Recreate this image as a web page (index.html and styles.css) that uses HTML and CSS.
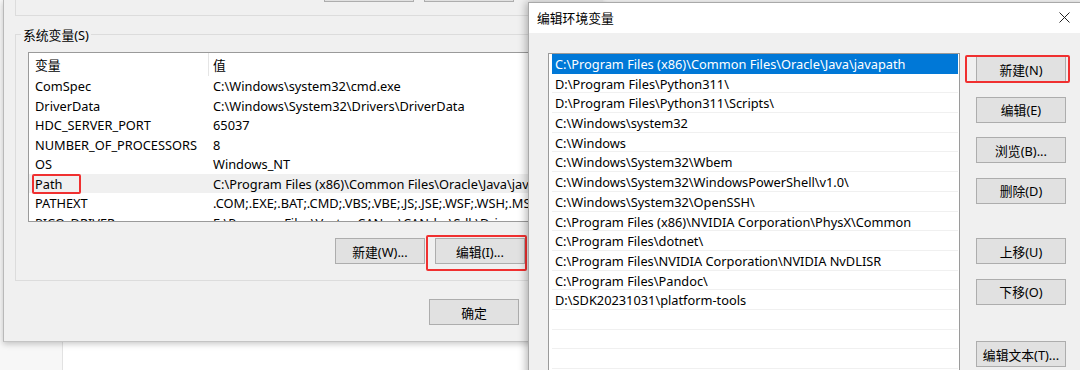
FILE: index.html
```html
<!DOCTYPE html>
<html lang="zh-CN">
<head>
  <meta charset="UTF-8">
  <meta name="viewport" content="width=device-width, initial-scale=1.0">
  <title>编辑环境变量</title>
  <link rel="stylesheet" href="styles.css">
</head>
<body>
  <div class="desktop">
    <div class="backdrop"></div>

    <!-- 环境变量窗口（在后面） -->
    <div class="window env-window">
      <div class="user-tail">
        <div class="btn-row btn-row-top">
          <button class="btn" aria-label="新建"></button>
          <button class="btn" aria-label="编辑"></button>
        </div>
      </div>

      <div class="group">
        <span class="group-title">系统变量(S)</span>
        <div class="var-list">
          <div class="var-row var-head">
            <span class="col-name">变量</span>
            <span class="col-value">值</span>
          </div>
          <div class="var-row"><span class="col-name">ComSpec</span><span class="col-value">C:\Windows\system32\cmd.exe</span></div>
          <div class="var-row"><span class="col-name">DriverData</span><span class="col-value">C:\Windows\System32\Drivers\DriverData</span></div>
          <div class="var-row"><span class="col-name">HDC_SERVER_PORT</span><span class="col-value">65037</span></div>
          <div class="var-row"><span class="col-name">NUMBER_OF_PROCESSORS</span><span class="col-value">8</span></div>
          <div class="var-row"><span class="col-name">OS</span><span class="col-value">Windows_NT</span></div>
          <div class="var-row is-current"><span class="col-name"><span class="mark mark-path"></span>Path</span><span class="col-value">C:\Program Files (x86)\Common Files\Oracle\Java\javapath;C:\Windows</span></div>
          <div class="var-row"><span class="col-name">PATHEXT</span><span class="col-value">.COM;.EXE;.BAT;.CMD;.VBS;.VBE;.JS;.JSE;.WSF;.WSH;.MSC</span></div>
          <div class="var-row"><span class="col-name">PICO_DRIVER</span><span class="col-value">E:\Program Files\Vector CANoe\CANdrv\Sdk\Drivers</span></div>
        </div>
        <div class="btn-row">
          <button class="btn">新建(W)...</button>
          <button class="btn btn-marked"><span class="mark mark-edit"></span>编辑(I)...</button>
        </div>
      </div>

      <div class="ok-row">
        <button class="btn">确定</button>
      </div>
    </div>

    <!-- 编辑环境变量对话框 -->
    <div class="window edit-dialog">
      <div class="titlebar">
        <span class="title">编辑环境变量</span>
        <span class="close">
          <svg width="11" height="11" viewBox="0 0 11 11"><path d="M0.5 0.5 L10.5 10.5 M10.5 0.5 L0.5 10.5" stroke="#222" stroke-width="1" fill="none"/></svg>
        </span>
      </div>
      <div class="dialog-body">
        <div class="path-list">
          <div class="path-row selected">C:\Program Files (x86)\Common Files\Oracle\Java\javapath</div>
          <div class="path-row">D:\Program Files\Python311\</div>
          <div class="path-row">D:\Program Files\Python311\Scripts\</div>
          <div class="path-row">C:\Windows\system32</div>
          <div class="path-row">C:\Windows</div>
          <div class="path-row">C:\Windows\System32\Wbem</div>
          <div class="path-row">C:\Windows\System32\WindowsPowerShell\v1.0\</div>
          <div class="path-row">C:\Windows\System32\OpenSSH\</div>
          <div class="path-row">C:\Program Files (x86)\NVIDIA Corporation\PhysX\Common</div>
          <div class="path-row">C:\Program Files\dotnet\</div>
          <div class="path-row">C:\Program Files\NVIDIA Corporation\NVIDIA NvDLISR</div>
          <div class="path-row">C:\Program Files\Pandoc\</div>
          <div class="path-row">D:\SDK20231031\platform-tools</div>
          <div class="path-row"></div>
          <div class="path-row"></div>
          <div class="path-row"></div>
          <div class="path-row"></div>
        </div>
        <div class="side-buttons">
          <button class="btn btn-marked"><span class="mark mark-new"></span>新建(N)</button>
          <button class="btn">编辑(E)</button>
          <button class="btn">浏览(B)...</button>
          <button class="btn">删除(D)</button>
          <button class="btn btn-move">上移(U)</button>
          <button class="btn">下移(O)</button>
          <button class="btn btn-text">编辑文本(T)...</button>
        </div>
      </div>
    </div>
  </div>
</body>
</html>
```

FILE: styles.css
```css
/* 基础 */
body {
  margin: 0;
  background: #ffffff;
  font-family: "Noto Sans", "Noto Sans CJK SC", sans-serif;
  font-size: 12.8px;
  color: #000000;
}

.desktop {
  position: relative;
  width: 1080px;
  height: 370px;
  overflow: hidden;
  background: #ffffff;
}

.backdrop {
  position: absolute;
  left: 0;
  top: 0;
  width: 62px;
  height: 370px;
  background: #f7f7f7;
  border-right: 1px solid #e2e2e2;
}

.window {
  position: absolute;
  background: #f0f0f0;
  box-sizing: border-box;
}

.btn {
  width: 90px;
  height: 26px;
  padding: 0;
  font: inherit;
  color: #000000;
  background: #e1e1e1;
  border: 1px solid #adadad;
  position: relative;
}

.btn-row {
  display: flex;
  gap: 10px;
  margin: 16px 0 0 307px;
}

/* 红色标注框 */
.mark {
  position: absolute;
  border: 2px solid #f03030;
  border-radius: 2px;
  pointer-events: none;
}

/* 环境变量窗口 */
.env-window {
  left: 3px;
  top: 0;
  width: 600px;
  border-left: 1px solid #b9b9b9;
  border-bottom: 1px solid #c4c4c4;
  box-shadow: 0 2px 6px rgba(0, 0, 0, 0.22);
  padding-bottom: 16px;
}

.user-tail {
  display: flow-root;
  margin-left: 11px;
  height: 15px;
  border-left: 1px solid #dcdcdc;
  border-bottom: 1px solid #dcdcdc;
}

.btn-row-top {
  margin: -24px 0 0 308px;
}

.group {
  margin: 18px 0 0 11px;
  border: 1px solid #dcdcdc;
  padding: 0 0 16px 12px;
}

.group-title {
  display: block;
  width: fit-content;
  margin: -9px 0 0 -7px;
  padding: 0 2px;
  line-height: 18px;
  background: #f0f0f0;
}

.var-list {
  margin-top: 8px;
  height: 170px;
  box-sizing: border-box;
  background: #ffffff;
  border: 1px solid #9a9a9a;
  overflow: hidden;
}

.var-row {
  display: flex;
  height: 19.5px;
  line-height: 20px;
  white-space: nowrap;
}

.var-head {
  height: 23px;
  line-height: 25px;
}

.var-head .col-value {
  border-left: 1px solid #e5e5e5;
  padding-left: 4px;
}

.col-name {
  position: relative;
  width: 179px;
  padding-left: 6px;
  box-sizing: border-box;
  flex-shrink: 0;
}

.col-value {
  padding-left: 5px;
}

.var-row.is-current {
  background: #f0f0f0;
}

.mark-path {
  left: 3px;
  top: 0;
  width: 45px;
  height: 16px;
}

.mark-edit {
  left: -10px;
  top: -4px;
  right: -3px;
  bottom: -8px;
}

.ok-row {
  margin: 18px 0 0 425px;
}

/* 编辑环境变量对话框 */
.edit-dialog {
  left: 528px;
  top: 2px;
  width: 560px;
  height: 380px;
  border: 1px solid #a9a9a9;
  box-shadow: -2px 0 8px rgba(0, 0, 0, 0.28);
}

.titlebar {
  display: flex;
  align-items: center;
  height: 30px;
  background: #ffffff;
}

.title {
  flex: 1;
  padding-left: 8px;
  padding-bottom: 2px;
}

.close {
  display: flex;
  align-items: center;
  justify-content: center;
  width: 46px;
  height: 30px;
  padding-bottom: 1px;
  box-sizing: border-box;
}

.dialog-body {
  display: flex;
  align-items: flex-start;
  padding: 20px 0 0 19px;
}

.path-list {
  width: 412px;
  height: 330px;
  box-sizing: border-box;
  padding: 0 1px 0 3px;
  background: #ffffff;
  border: 1px solid #9a9a9a;
  overflow: hidden;
}

.path-row {
  height: 19.7px;
  line-height: 20px;
  padding-left: 3px;
  box-sizing: border-box;
  border-bottom: 1px solid #f0f0f0;
  white-space: nowrap;
}

.path-row.selected {
  background: #0078d7;
  color: #ffffff;
  border-bottom-color: #0078d7;
}

.side-buttons {
  display: flex;
  flex-direction: column;
  gap: 14.5px;
  margin: 3px 0 0 16px;
}

.btn-move {
  margin-top: 20px;
}

.btn-text {
  margin-top: 22px;
}

.mark-new {
  left: -12px;
  top: -2px;
  right: -5px;
  bottom: -2px;
}
```
